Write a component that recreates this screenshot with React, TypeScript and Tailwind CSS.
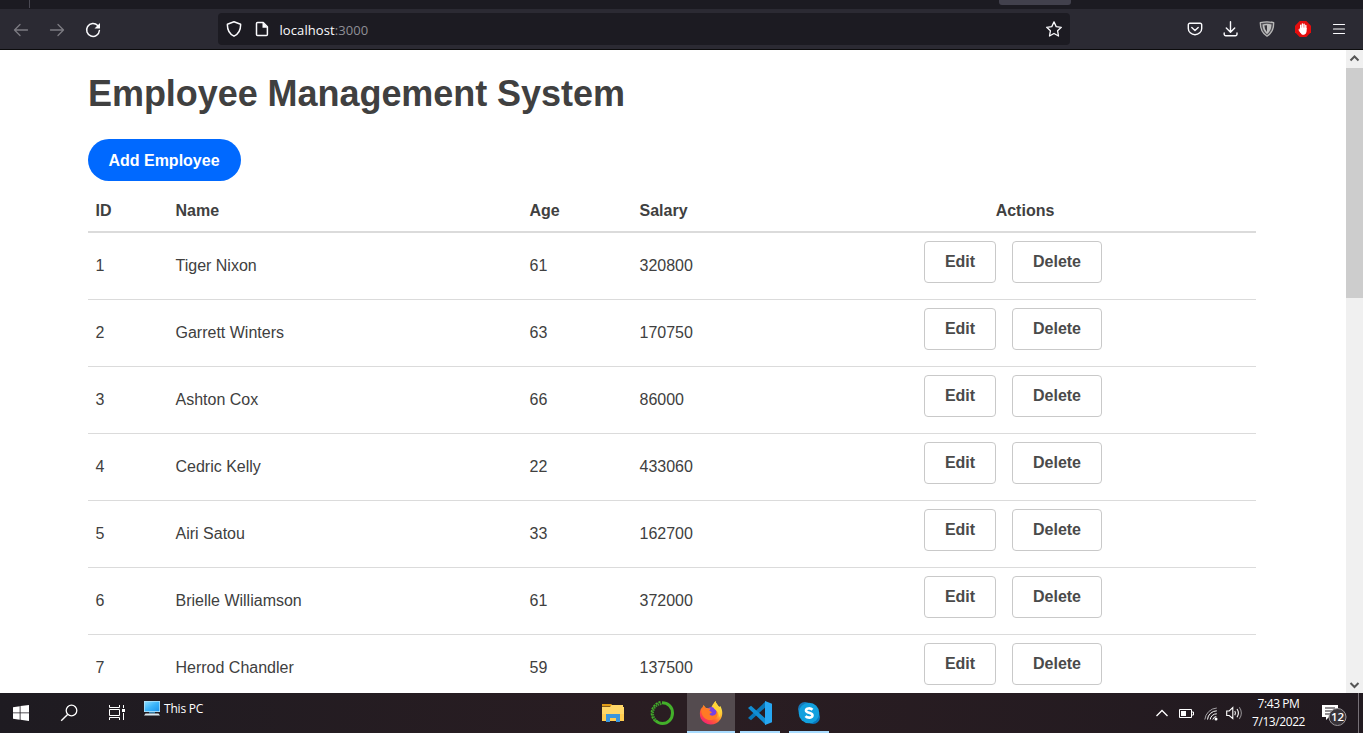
import React from 'react';

const employees: [number, string, number, number][] = [
  [1, 'Tiger Nixon', 61, 320800],
  [2, 'Garrett Winters', 63, 170750],
  [3, 'Ashton Cox', 66, 86000],
  [4, 'Cedric Kelly', 22, 433060],
  [5, 'Airi Satou', 33, 162700],
  [6, 'Brielle Williamson', 61, 372000],
  [7, 'Herrod Chandler', 59, 137500],
];

function ToolIcon({ children }: { children: React.ReactNode }) {
  return (
    <svg className="h-4 w-4 shrink-0" viewBox="0 0 16 16" fill="none" stroke="#fbfbfe" strokeWidth="1.3" strokeLinecap="round" strokeLinejoin="round">
      {children}
    </svg>
  );
}

function BrowserBar() {
  return (
    <header className="shrink-0">
      <div className="flex h-[9px] bg-[#1c1b22]">
        <div className="h-[8px] w-[30px] border-r border-[#4a4953]" />
        <div className="ml-[969px] h-[5px] w-[72px] rounded-b-[3px] bg-[#42414d]" />
      </div>
      <div className="flex h-[41px] items-center border-b border-[#0c0c0d] bg-[#2b2a33] pl-[13px]">
        <div className="flex w-[205px] gap-5 pt-px">
          <ToolIcon>
            <path stroke="#7c7b82" d="M14.500 8H1.500M7 2.500 1.500 8 7 13.500" />
          </ToolIcon>
          <ToolIcon>
            <path stroke="#7c7b82" d="M1.500 8h13M9 2.500 14.500 8 9 13.500" />
          </ToolIcon>
          <ToolIcon>
            <path strokeWidth="1.500" d="M12.700 3.600A6.400 6.400 0 1 0 14.400 8.500" />
            <path fill="#fbfbfe" stroke="none" d="M15 1v5.200a.4.4 0 0 1-.4.4H9.500z" />
          </ToolIcon>
        </div>
        <div className="flex h-8 w-[852px] items-center rounded bg-[#1c1b22] px-2">
          <ToolIcon>
            <path strokeWidth="1.500" d="M8 .8 14.600 3.200C14.800 8.500 12.800 12.800 8 15.200 3.200 12.800 1.200 8.500 1.400 3.200z" />
          </ToolIcon>
          <div className="w-3" />
          <ToolIcon>
            <path strokeWidth="1.500" d="M3.500 1.500h5.700l4.200 4.200v7.800a1 1 0 0 1-1 1H3.500a1 1 0 0 1-1-1v-11a1 1 0 0 1 1-1z" />
            <path fill="#fbfbfe" stroke="none" d="M8.500 1v5.700h5.400z" />
          </ToolIcon>
          <span className="ml-[9.500px] pt-[2px] font-['Open_Sans',sans-serif] text-[13px] leading-4 tracking-[0.09px] text-[#fbfbfe]">
            localhost<span className="text-[#8f8f96]">:3000</span>
          </span>
          <div className="ml-auto flex">
            <ToolIcon>
              <path d="m8 .9 2.200 4.700 5.100.7-3.700 3.500.9 5.200L8 12.500 3.500 15l.9-5.200L.7 6.300l5.100-.7z" />
            </ToolIcon>
          </div>
        </div>
        <div className="ml-[117px] flex gap-5">
          <ToolIcon>
            <path strokeWidth="1.400" d="M2.800 2.200h10.400a1.500 1.500 0 0 1 1.500 1.500v3.700a6.700 6.300 0 0 1-13.400 0V3.700a1.500 1.500 0 0 1 1.500-1.500z" />
            <path strokeWidth="1.400" d="M4.800 6.500 8 9.400l3.200-2.900" />
          </ToolIcon>
          <ToolIcon>
            <path strokeWidth="1.400" d="M7.500.8v10M3.300 7l4.200 4.200L11.700 7M1.200 12v1.200a1.500 1.500 0 0 0 1.500 1.500h9.800a1.500 1.500 0 0 0 1.500-1.500V12" />
          </ToolIcon>
          <ToolIcon>
            <path stroke="#b8b8b8" fill="#504f55" d="M1.300 1.700Q8-.1 14.700 1.700 14.800 11 8 15.200 1.200 11 1.300 1.700z" />
            <path stroke="none" fill="#bdbdbd" d="M3.500 3.500Q8 2.200 12.500 3.500 12.200 10 8 13.200 3.800 10 3.500 3.500z" />
            <path stroke="none" fill="#37363d" d="M5.300 4.600 8 4.200v6.700Q5.400 8.500 5.300 4.600z" />
          </ToolIcon>
          <ToolIcon>
            <path fill="#e40d0d" stroke="none" d="M4.700 0h6.600L16 4.700v6.600L11.300 16H4.700L0 11.300V4.700z" />
            <path stroke="#fff" strokeWidth="1.400" d="M5.700 8V4.300M7.400 7V2.900M9.100 7V3.200M10.800 8V4.500" />
            <path stroke="#fff" strokeWidth=".8" fill="#fff" d="M5.400 7h5.800v3.200q0 3-2.800 3.200-1.700 0-2.700-1.500L3.800 8.700q.7-.8 1.600.4z" />
          </ToolIcon>
          <ToolIcon>
            <path strokeWidth="1.200" d="M2.500 3.500h11M2.500 8h11M2.500 12.500h11" />
          </ToolIcon>
        </div>
      </div>
    </header>
  );
}

function EmployeePage() {
  return (
    <main className="flex-1 overflow-hidden bg-white pl-[88px] font-['Liberation_Sans',Arial,sans-serif] text-[16px] text-[#404040]">
      <h1 className="pt-[20px] text-[36px] leading-[48px] font-bold tracking-[-0.05px] whitespace-nowrap">Employee Management System</h1>
      <button className="mt-[21px] block h-[42px] w-[153px] rounded-full bg-[#0069ff] pt-[2px] pr-px font-bold text-white">Add Employee</button>
      <table className="mt-2 w-[1168px] table-fixed border-collapse">
        <colgroup>
          <col className="w-[80px]" />
          <col className="w-[354px]" />
          <col className="w-[110px]" />
          <col className="w-[162px]" />
          <col className="w-[462px]" />
        </colgroup>
        <thead>
          <tr className="h-[43px] border-b-2 border-[#dbdbdb] text-left">
            <th className="px-[7.500px] pt-px">ID</th>
            <th className="px-[7.500px] pt-px">Name</th>
            <th className="px-[7.500px] pt-px">Age</th>
            <th className="px-[7.500px] pt-px">Salary</th>
            <th className="px-2 pt-px text-center">Actions</th>
          </tr>
        </thead>
        <tbody>
          {employees.map(([id, name, age, salary]) => (
            <tr key={id} className="h-[67px] border-b border-[#dbdbdb]">
              <td className="px-[7.500px]">{id}</td>
              <td className="px-[7.500px]">{name}</td>
              <td className="px-[7.500px]">{age}</td>
              <td className="px-[7.500px]">{salary}</td>
              <td className="p-0">
                <div className="flex gap-4 pb-2 pl-[130px] font-bold text-[#4a4a4a]">
                  <button className="h-[42px] w-[72px] rounded border border-[#c9c9c9]">Edit</button>
                  <button className="h-[42px] w-[90px] rounded border border-[#c9c9c9]">Delete</button>
                </div>
              </td>
            </tr>
          ))}
        </tbody>
      </table>
    </main>
  );
}

function ScrollBar() {
  return (
    <aside className="flex w-[17px] shrink-0 flex-col bg-[#f0f0f0]">
      <svg className="h-[18px] w-[17px]" viewBox="0 0 17 18" fill="none" stroke="#555" strokeWidth="2">
        <path d="m4.500 10.500 4-4 4 4" />
      </svg>
      <div className="h-[230px] bg-[#cdcdcd]" />
      <svg className="mt-auto h-[17px] w-[17px]" viewBox="0 0 17 17" fill="none" stroke="#555" strokeWidth="2">
        <path d="m4.500 7 4 4 4-4" />
      </svg>
    </aside>
  );
}

function TaskbarApp({ className, children }: { className: string; children: React.ReactNode }) {
  return (
    <div className={'flex h-10 shrink-0 items-center justify-center ' + className}>
      <svg className="h-6 w-6" viewBox="0 0 24 24" fill="none">
        {children}
      </svg>
    </div>
  );
}

function Taskbar() {
  return (
    <footer className="flex h-10 shrink-0 bg-linear-to-r from-[#1e1b21] via-[#2a1d22] to-[#211a20] font-['Open_Sans',sans-serif] text-[12px] text-white">
      <TaskbarApp className="w-[42px]">
        <path fill="#fff" d="m4 6.200 6.700-1v6.300H4zM11.500 5.100 20 4v7.500h-8.500zM4 12.300h6.700v6.400L4 17.700zM11.500 12.300H20V20l-8.500-1.200z" />
      </TaskbarApp>
      <TaskbarApp className="ml-[6px] w-[42px]">
        <circle cx="14.500" cy="9.500" r="5.300" stroke="#fff" strokeWidth="1.300" />
        <path stroke="#fff" strokeWidth="1.400" d="m10.600 13.400-6.400 6.400" />
      </TaskbarApp>
      <TaskbarApp className="ml-[6px] w-[42px]">
        <path stroke="#fff" strokeWidth="1" d="M4.500 4v2.500h10V4M4.500 19v-2.500h10V19M4.500 8.500h10v6h-10zM18.500 4v3M18.500 12v7" />
        <path fill="#fff" d="M17 8h3v3h-3z" />
      </TaskbarApp>
      <div className="flex h-[30px] w-[446px] items-center pl-[6px]">
        <svg className="h-4 w-4 shrink-0" viewBox="0 0 16 16">
          <defs>
            <linearGradient id="screen" x1="0" y1="0" x2="1" y2="1">
              <stop offset="0" stopColor="#8cddff" />
              <stop offset=".5" stopColor="#3cb5fa" />
              <stop offset="1" stopColor="#1d94ec" />
            </linearGradient>
          </defs>
          <path fill="#b9e6fa" d="M0 1h16v11H0z" />
          <path fill="url(#screen)" d="M.7 1.700h14.600v9.500H.7z" />
          <path fill="#367fa8" d="M5 12h6v1.500H5z" />
          <path fill="#dce7ed" d="M1.500 13.500h13L16 15.500H0z" />
        </svg>
        <span className="ml-1 pt-px leading-4 tracking-[-0.2px]">This PC</span>
      </div>
      <TaskbarApp className="ml-[5px] w-12">
        <path fill="#e09b17" d="M1 3h9.500l1 2.500H1z" />
        <path fill="#ffd768" d="M10.500 4H22v2h1v14H1V6h8z" />
        <path fill="#ffcc50" d="M1 13h22v7H1z" />
        <path fill="#3a96dd" d="M5 13h14v8h-4v-4H9v4H5z" />
        <path fill="#ffcc50" d="M9 17h6v3H9z" />
      </TaskbarApp>
      <TaskbarApp className="w-[50px]">
        <path stroke="#43b02a" strokeWidth="3" d="M12 1.800c6 0 10.500 4.300 10.500 10.200S18 22.500 12.500 22.500A10 10 0 0 1 5.500 19.500" />
        <path stroke="#43b02a" strokeWidth="1.800" strokeDasharray="2.200 .9" d="M10.500 1A11.200 11.200 0 0 0 5.500 20.500" />
        <path stroke="#3d9a2a" strokeWidth="2" strokeDasharray="1.600 .8" d="M11.500 2.900A9.300 9.300 0 0 0 6 19" />
      </TaskbarApp>
      <TaskbarApp className="w-12 border-b-2 border-[#a9dcff] bg-[#544b4f] pt-[2px]">
        <defs>
          <linearGradient id="fox" x1="20" y1="2" x2="5" y2="22" gradientUnits="userSpaceOnUse">
            <stop offset="0" stopColor="#fff44f" />
            <stop offset=".4" stopColor="#ffb32e" />
            <stop offset=".68" stopColor="#ff5b35" />
            <stop offset="1" stopColor="#f51f75" />
          </linearGradient>
        </defs>
        <path fill="url(#fox)" d="M16.500 0c.4 2.700 2.200 3.600 3.600 6l1.200-1c2.500 4.300 2.700 9.200.2 13.200A11.500 11.500 0 0 1 1.800 17.500C.3 14 .7 9.500 2.500 6.500l.4 1.400L4.500 4l2.300 3H12l1.500-3z" />
        <circle cx="12.300" cy="11.800" r="5.800" fill="#7542e5" />
        <path fill="#ff7a25" d="M2.200 9 4.500 4.600l2.500 2.600 4.600.2-1.200 2.400 2.700 1.500-2.600 1.700c.9 2.200 4 2.300 6 .3 1-1 1.200-2.600.2-4.300 3.200 2.500 2.400 8-2.200 9.500C8 20.800 2.200 16 2.200 9z" />
        <path fill="#ffd437" d="M16.500 0c.4 2.700 2.200 3.600 3.600 6 2.400 3.700 1.900 7.800 0 10.200.2-3.800-1.700-6-4-7.700-2.500-2-2.500-4.600.4-8.500z" />
      </TaskbarApp>
      <TaskbarApp className="ml-[5px] w-10 border-b-2 border-[#a9dcff] pt-[2px]">
        <path fill="#0877b9" d="m18 0-.2 6L3 19.200 0 17l18-17z" />
        <path fill="#118ed4" d="m0 7 3-2.200L18 18v6z" />
        <path fill="#27a7f2" d="m17 0 7 2.800v18.400L17 24z" />
      </TaskbarApp>
      <TaskbarApp className="ml-[9px] w-10 border-b-2 border-[#a9dcff] pt-[2px]">
        <circle cx="8" cy="8" r="7" fill="#1678b8" />
        <circle cx="16" cy="16" r="7" fill="#0877bd" />
        <circle cx="12" cy="12" r="10.300" fill="#12a0de" />
        <path stroke="#fff" strokeWidth="2.600" d="M15.500 8.700C13.500 6.800 9 7 9 9.500c0 2.900 6.500 1.700 6.500 4.800 0 2.900-5 3-7 .8" />
      </TaskbarApp>
      <div className="ml-auto flex h-10 items-center">
        <svg className="mr-[11px] h-4 w-3" viewBox="0 0 12 16" fill="none" stroke="#fff" strokeWidth="1.300">
          <path d="m.5 11 5.500-5.500L11.500 11" />
        </svg>
        <svg className="mr-[10px] h-4 w-[15px]" viewBox="0 0 15 16" fill="none" stroke="#fff">
          <path d="M.5 4.500h12v8H.5zM13 7h1.500v3H13" />
          <path fill="#fff" stroke="none" d="M2 6h5v5H2z" />
        </svg>
        <svg className="mr-[7px] h-4 w-[15px]" viewBox="0 0 15 16" fill="none" stroke="#fff">
          <path stroke="#a5a2a6" d="M.8 14.500A13 13 0 0 1 12.800 3" />
          <path d="M3.500 14.500a9.500 9.500 0 0 1 9.300-8.700M6.200 14.500a6.500 6.500 0 0 1 6.600-5.700" />
          <path d="M8.800 14.500a4 4 0 0 1 3.500-3" />
          <circle cx="12" cy="14" r="1.500" fill="#fff" stroke="none" />
        </svg>
        <svg className="mr-[9px] h-4 w-[17px]" viewBox="0 0 17 16" fill="none" stroke="#fff" strokeWidth="1.100">
          <path d="M.7 6h2.500l3.600-3.500v11L3.200 10.500H.7z" />
          <path d="M8.800 6q1.300 2 0 4.200M11 4q2.800 4 0 8.200" />
          <path stroke="#8c888c" d="M13.300 2.300q4.200 5.800 0 11.500" />
        </svg>
        <div className="w-[53px] text-center leading-[18px] tracking-[-0.42px] whitespace-nowrap">
          <div>7:43 PM</div>
          <div>7/13/2022</div>
        </div>
        <svg className="ml-[17px] h-[26px] w-[26px]" viewBox="0 0 26 26" fill="none">
          <path fill="#fff" d="M0 5h16v12H7l-3 3v-3H0z" />
          <path stroke="#272127" strokeWidth="1.200" d="M3 8h10M3 11h10M3 14h6" />
          <circle cx="15.500" cy="17" r="8.500" fill="#393439" stroke="#9b979a" />
          <text x="15.500" y="21" textAnchor="middle" fill="#fff" fontSize="11.500" fontWeight="600" fontFamily="Open Sans">12</text>
        </svg>
        <div className="ml-[10px] h-10 w-[5px] border-l border-[#777177]" />
      </div>
    </footer>
  );
}

export default function App() {
  return (
    <div className="flex h-[733px] w-[1363px] flex-col overflow-hidden">
      <BrowserBar />
      <div className="flex h-[643px] shrink-0">
        <EmployeePage />
        <ScrollBar />
      </div>
      <Taskbar />
    </div>
  );
}
